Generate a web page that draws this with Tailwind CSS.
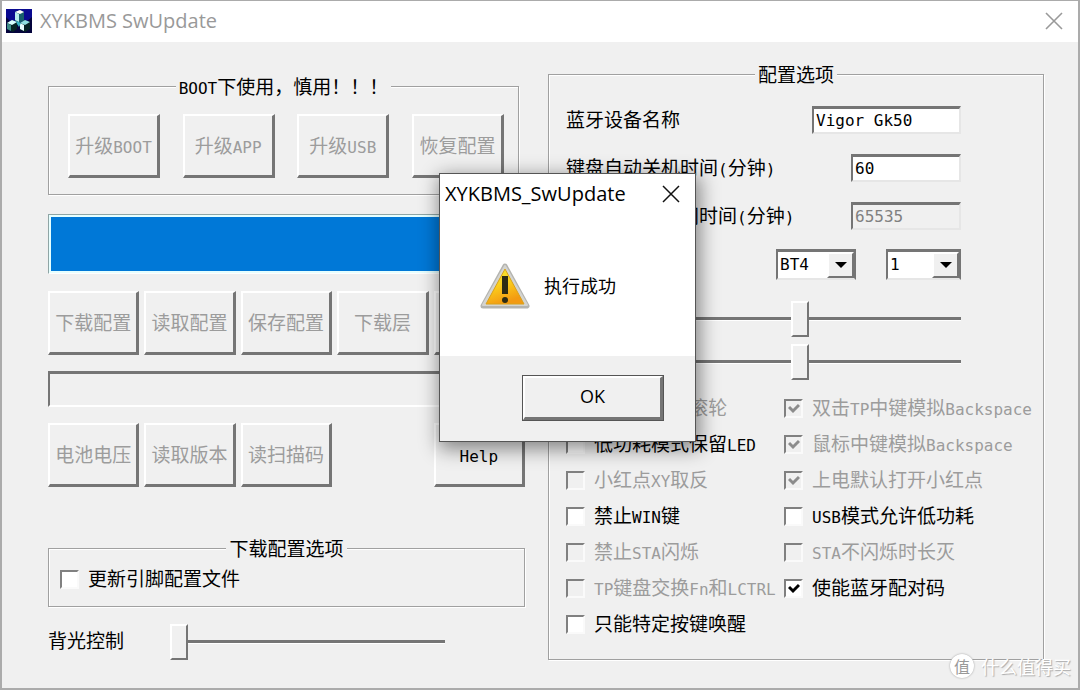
<!DOCTYPE html>
<html lang="zh-CN">
<head>
    <meta charset="UTF-8">
    <meta name="viewport" content="width=device-width, initial-scale=1.0">
    <title>XYKBMS SwUpdate</title>
    <script src="https://cdn.jsdelivr.net/npm/@tailwindcss/browser@4"></script>
</head>
<body class="bg-[#f0f0f0]">
<div class="relative min-h-screen flex flex-col border-2 border-t border-[#ababab] bg-[#f0f0f0] text-black text-[19px] leading-6 font-['DejaVu_Sans_Mono','Noto_Sans_CJK_SC',monospace] [&_b]:font-normal [&_b]:text-base [&_b]:leading-none">
    <!-- Title bar -->
    <header class="h-[41px] bg-white flex items-center pl-1 pr-[15px] pb-[2px]">
        <svg class="w-[26px] h-6" viewBox="0 0 26 24">
            <rect width="26" height="24" fill="#04043c"/>
            <path d="M0 0h26v8l-6 5H5L0 8z" fill="#0a0a90"/>
            <path d="M9 3l5-2 4 2v9l-5 2-4-2z" fill="#17606c"/>
            <path d="M9 3l5-2 4 2-4 2z" fill="#fff"/>
            <path d="M9 3l4 2v8l-4-2z" fill="#b8ecec"/>
            <path d="M1 14l5-3 5 2v7l-4 3-5-2z" fill="#062424"/>
            <path d="M1 14l5-3 5 2-5 3z" fill="#d8ffff"/>
            <path d="M1 14l4 2v6l-4-2z" fill="#3d8c88"/>
            <path d="M14 14l5-3 5 2v7l-5 3-5-2z" fill="#062424"/>
            <path d="M14 14l5-3 5 2-5 3z" fill="#8fe0e0"/>
            <path d="M14 14l4 2v6l-4-2z" fill="#e8ffff"/>
            <path d="M10 12l5 2-2 4-2-3z" fill="#39b5c4"/>
        </svg>
        <h1 class="ml-2 text-xl text-[#999] font-['Open_Sans','Noto_Sans',sans-serif]">XYKBMS SwUpdate</h1>
        <button type="button" aria-label="关闭" class="ml-auto">
            <svg class="w-[18px] h-[18px]" viewBox="0 0 18 18" fill="none" stroke="#999" stroke-width="1.6"><path d="M1 1l16 16M17 1L1 17"/></svg>
        </button>
    </header>

    <main class="flex-1 grid grid-cols-[477fr_496fr] items-start gap-[23px] pl-[46px] pr-[34px]
        [&_fieldset]:border [&_fieldset]:border-[#a0a0a0] [&_fieldset]:shadow-[1px_1px_0_#fff,inset_1px_1px_0_#fff]
        [&_legend]:mx-auto [&_legend]:px-[3px] [&_legend]:pt-[2px] [&_legend]:leading-[22px] [&_legend]:bg-[#f0f0f0]
        [&_button]:h-16 [&_button]:whitespace-nowrap [&_button]:border-2 [&_button]:border-r-3 [&_button]:border-b-3 [&_button]:border-t-white [&_button]:border-l-white [&_button]:border-r-[#757575] [&_button]:border-b-[#757575] [&_button:disabled]:text-[#9c9c9c]
        [&_input[type=range]]:appearance-none [&_input[type=range]]:h-9 [&_input[type=range]]:bg-transparent
        [&_input::-webkit-slider-runnable-track]:h-[3px] [&_input::-webkit-slider-runnable-track]:bg-[#757575] [&_input::-webkit-slider-runnable-track]:shadow-[0_1px_0_#fff]
        [&_input::-webkit-slider-thumb]:appearance-none [&_input::-webkit-slider-thumb]:w-[18px] [&_input::-webkit-slider-thumb]:h-9 [&_input::-webkit-slider-thumb]:-mt-4 [&_input::-webkit-slider-thumb]:bg-[#f0f0f0] [&_input::-webkit-slider-thumb]:border-2 [&_input::-webkit-slider-thumb]:border-t-white [&_input::-webkit-slider-thumb]:border-l-white [&_input::-webkit-slider-thumb]:border-r-[#757575] [&_input::-webkit-slider-thumb]:border-b-[#757575]">

        <!-- Left column -->
        <div class="min-w-0 pt-8">
            <fieldset class="mr-[6px] py-4">
                <legend><b>BOOT</b>下使用，慎用！！！</legend>
                <div class="flex justify-between pl-[19px] pr-[14px] [&_button]:w-[92px]">
                    <button type="button" disabled>升级<b>BOOT</b></button>
                    <button type="button" disabled>升级<b>APP</b></button>
                    <button type="button" disabled>升级<b>USB</b></button>
                    <button type="button" disabled>恢复配置</button>
                </div>
            </fieldset>

            <div role="progressbar" aria-valuenow="100" aria-label="进度" class="mt-[19px] h-[60px] border border-[#8fa5a5] border-b-white border-r-white p-[2px] bg-[#e6ffff]">
                <div class="h-full bg-[#0078d7]" style="width: 100%"></div>
            </div>

            <div class="mt-[17px] grid grid-cols-5 gap-x-[5px]">
                <button type="button" disabled>下载配置</button>
                <button type="button" disabled>读取配置</button>
                <button type="button" disabled>保存配置</button>
                <button type="button" disabled>下载层</button>
                <button type="button" disabled aria-label="读取层"></button>
            </div>

            <output class="block mt-4 h-[36px] border-2 border-t-3 border-[#757575] border-b-white border-r-white"></output>

            <div class="mt-4 grid grid-cols-5 gap-x-[5px]">
                <button type="button" disabled>电池电压</button>
                <button type="button" disabled>读取版本</button>
                <button type="button" disabled>读扫描码</button>
                <button type="button" class="col-start-5"><b>Help</b></button>
            </div>

            <fieldset class="mt-[49px] pb-[10px]">
                <legend>下载配置选项</legend>
                <div data-checks="download" class="pl-[11px]"></div>
            </fieldset>

            <div class="mt-4 flex items-center">
                <label for="backlight">背光控制</label>
                <input id="backlight" type="range" min="0" max="100" value="0" class="ml-[46px] w-[275px]">
            </div>
        </div>

        <!-- Right column -->
        <fieldset class="min-w-0 mt-5 pt-[10px] pb-[18px]">
            <legend>配置选项</legend>
            <div class="pl-[17px] pr-[82px] [&>div]:flex [&>div]:items-center [&>div]:justify-between [&>div]:h-12 [&_label]:whitespace-nowrap
                [&_input[type=text]]:h-7 [&_input[type=text]]:pl-[2px] [&_input[type=text]]:text-base [&_input[type=text]]:bg-white [&_input[type=text]]:border-2 [&_input[type=text]]:border-t-3 [&_input[type=text]]:border-t-[#757575] [&_input[type=text]]:border-l-[#757575] [&_input[type=text]]:border-b-[#e6e6e6] [&_input[type=text]]:border-r-[#e6e6e6]
                [&_input[type=text]:disabled]:bg-[#f0f0f0] [&_input[type=text]:disabled]:text-[#808080]
                [&_select]:appearance-none [&_select]:w-full [&_select]:h-[31px] [&_select]:pl-[2px] [&_select]:text-base [&_select]:bg-white [&_select]:border-2 [&_select]:border-t-3 [&_select]:border-t-[#757575] [&_select]:border-l-[#757575] [&_select]:border-b-[#e6e6e6] [&_select]:border-r-[#757575]">
                <div>
                    <label for="bt-name">蓝牙设备名称</label>
                    <input id="bt-name" type="text" value="Vigor Gk50" class="w-[149px]">
                </div>
                <div>
                    <label for="kb-off">键盘自动关机时间<b>(</b>分钟<b>)</b></label>
                    <input id="kb-off" type="text" value="60" class="w-[110px]">
                </div>
                <div>
                    <label for="tp-off">小红点自动关闭时间<b>(</b>分钟<b>)</b></label>
                    <input id="tp-off" type="text" value="65535" disabled class="w-[110px]">
                </div>
                <div>
                    <label for="channel">蓝牙通道</label>
                    <span class="relative ml-auto w-[80px]">
                        <select id="channel"><option>BT4</option></select>
                        <span class="pointer-events-none absolute right-[2px] top-[3px] bottom-[2px] w-[27px] flex items-center justify-center bg-[#f0f0f0] border-2 border-t-white border-l-white border-r-[#757575] border-b-[#757575]">
                            <svg class="w-3 h-[6px]" viewBox="0 0 12 6"><path d="M0 0h12L6 6z"/></svg>
                        </span>
                    </span>
                    <span class="relative ml-[30px] w-[75px]">
                        <select id="layer" aria-label="层"><option>1</option></select>
                        <span class="pointer-events-none absolute right-[2px] top-[3px] bottom-[2px] w-[27px] flex items-center justify-center bg-[#f0f0f0] border-2 border-t-white border-l-white border-r-[#757575] border-b-[#757575]">
                            <svg class="w-3 h-[6px]" viewBox="0 0 12 6"><path d="M0 0h12L6 6z"/></svg>
                        </span>
                    </span>
                </div>
            </div>
            <div class="mt-[9px] pl-[17px] pr-[82px] [&>div]:flex [&>div]:items-center [&>div]:justify-between [&>div]:h-[43px]">
                <div>
                    <label for="speed">移动速度</label>
                    <input id="speed" type="range" min="0" max="100" value="43" class="w-[285px]">
                </div>
                <div>
                    <label for="scroll">滚轮速度</label>
                    <input id="scroll" type="range" min="0" max="100" value="43" class="w-[285px]">
                </div>
            </div>
            <div data-checks="options" class="mt-[6px] pl-[17px] grid grid-cols-[218px_1fr]"></div>
        </fieldset>
    </main>

    <!-- Message box -->
    <div role="dialog" aria-labelledby="msg-title" class="absolute left-[437px] top-[172px] w-[257px] border border-[#555] bg-white shadow-[2px_5px_18px_2px_rgba(0,0,0,0.45)] font-['Open_Sans','Noto_Sans_CJK_SC',sans-serif]">
        <div class="flex items-center justify-between h-[39px] pl-[5px] pr-[15px]">
            <h2 id="msg-title" class="text-xl">XYKBMS_SwUpdate</h2>
            <button type="button" aria-label="关闭">
                <svg class="w-[18px] h-[18px]" viewBox="0 0 18 18" fill="none" stroke="#111" stroke-width="1.5"><path d="M1 1l16 16M17 1L1 17"/></svg>
            </button>
        </div>
        <div class="flex items-center gap-[14px] pl-10 pt-[49px] pb-[46px]">
            <svg class="w-[50px] h-12" viewBox="0 0 50 48">
                <defs>
                    <linearGradient id="warn" x1="0" y1="0" x2="0.4" y2="1">
                        <stop offset="0" stop-color="#f4ec3a"/>
                        <stop offset="0.5" stop-color="#fbd01c"/>
                        <stop offset="1" stop-color="#f39a12"/>
                    </linearGradient>
                </defs>
                <path d="M25 4L47 44H3z" fill="#b4b4b0" stroke="#b4b4b0" stroke-width="5" stroke-linejoin="round"/>
                <path d="M25 4L47 43H3z" fill="#d4d4d0" stroke="#d4d4d0" stroke-width="2" stroke-linejoin="round"/>
                <path d="M25 7L44 42H6z" fill="url(#warn)" stroke="#d9a21b" stroke-linejoin="round"/>
                <path d="M22 14h6v18h-6z" fill="#2e2c14"/>
                <circle cx="25" cy="38" r="3" fill="#2e2c14"/>
            </svg>
            <p class="text-lg leading-6">执行成功</p>
        </div>
        <div class="bg-[#f0f0f0] pt-[19px] pb-5 pr-[31px] flex justify-end">
            <div class="border border-[#555]">
                <button type="button" class="block w-[140px] h-[44px] pb-1 text-lg border-2 border-r-3 border-b-3 border-t-white border-l-white border-r-[#757575] border-b-[#757575]">OK</button>
            </div>
        </div>
    </div>

    <!-- Watermark -->
    <div class="absolute right-[7px] bottom-[10px] flex items-center gap-[7px] text-white text-lg leading-6 font-['Noto_Sans_CJK_SC',sans-serif] [text-shadow:1px_1px_1px_#aaa]">
        <span class="w-6 h-6 rounded-full bg-white text-[#999] text-base leading-6 text-center shadow-[0_0_2px_#999] [text-shadow:none]">值</span>
        什么值得买
    </div>
</div>

<script>
    const checks = {
        download: [
            { label: '更新引脚配置文件' },
        ],
        options: [
            { label: '<b>TP</b>中键模拟滚轮', disabled: true },
            { label: '双击<b>TP</b>中键模拟<b>Backspace</b>', disabled: true, checked: true },
            { label: '低功耗模式保留<b>LED</b>' },
            { label: '鼠标中键模拟<b>Backspace</b>', disabled: true, checked: true },
            { label: '小红点<b>XY</b>取反', disabled: true },
            { label: '上电默认打开小红点', disabled: true, checked: true },
            { label: '禁止<b>WIN</b>键' },
            { label: '<b>USB</b>模式允许低功耗' },
            { label: '禁止<b>STA</b>闪烁', disabled: true },
            { label: '<b>STA</b>不闪烁时长灭', disabled: true },
            { label: '<b>TP</b>键盘交换<b>Fn</b>和<b>LCTRL</b>', disabled: true },
            { label: '使能蓝牙配对码', checked: true },
            { label: '只能特定按键唤醒' },
        ],
    };

    document.querySelectorAll('[data-checks]').forEach((box) => {
        box.innerHTML = checks[box.dataset.checks].map((c) => `
            <label class="h-9 pt-[2px] flex items-center gap-[9px] whitespace-nowrap has-disabled:text-[#9c9c9c]">
                <span class="relative w-[19px] h-[19px]">
                    <input type="checkbox" class="peer block appearance-none w-[19px] h-[19px] bg-white disabled:bg-[#f0f0f0] border-2 border-t-[#808080] border-l-[#808080] border-b-[#fafafa] border-r-[#fafafa]" ${c.checked ? 'checked' : ''} ${c.disabled ? 'disabled' : ''}>
                    <svg class="hidden peer-checked:block absolute left-1 top-1 w-3 h-3 text-black peer-disabled:text-[#8c8c8c] pointer-events-none" viewBox="0 0 12 12" fill="none" stroke="currentColor" stroke-width="3"><path d="M1 4l4 4 6-6"/></svg>
                </span>
                <span>${c.label}</span>
            </label>`).join('');
    });
</script>
</body>
</html>
